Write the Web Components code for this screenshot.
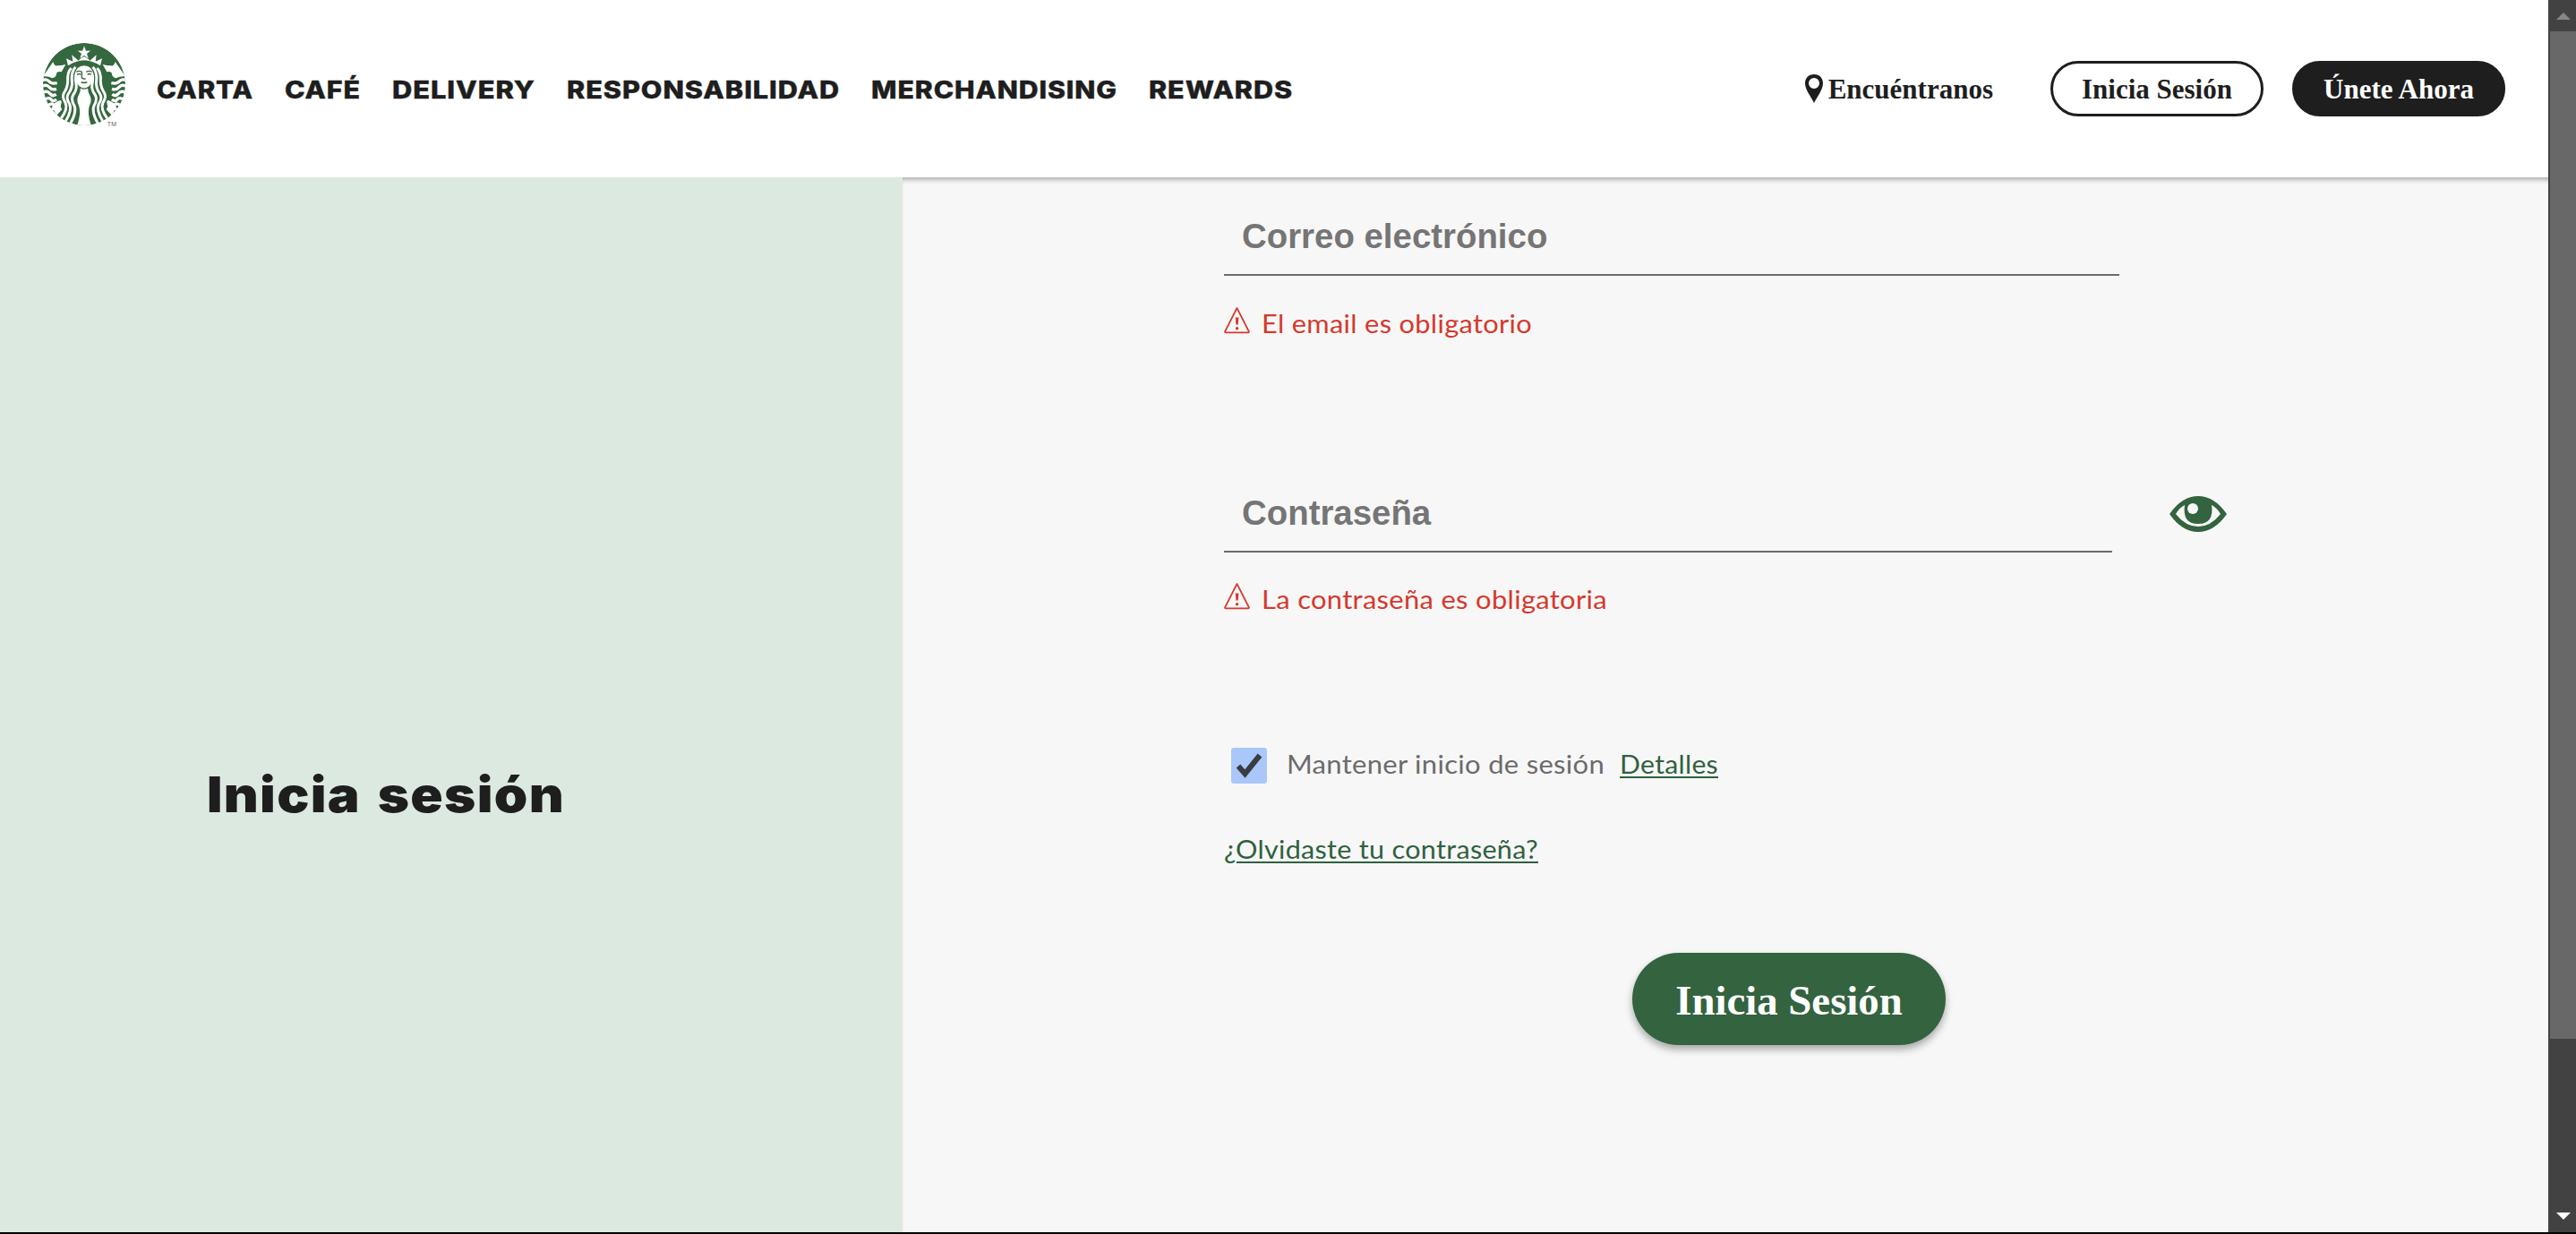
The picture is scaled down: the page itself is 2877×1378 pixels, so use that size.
<!DOCTYPE html>
<html lang="es"><head><meta charset="utf-8"><title>Inicia sesión</title>
<style>html,body{margin:0;height:100%;overflow:hidden}body{background:#f7f7f7}</style></head>
<body><login-page></login-page>
<script>
const define=(name,html,setup)=>customElements.define(name,class extends HTMLElement{
  connectedCallback(){
    if(this.shadowRoot)return;
    const t=document.createElement('template');t.innerHTML=html;
    const r=this.attachShadow({mode:'open'});r.append(t.content.cloneNode(true));
    if(setup)setup(this,r);
  }});

// Text run set to a given measure, by tracking or by widening its glyphs
define('fit-text','<style>:host{display:block;white-space:nowrap}span{display:inline-block;transform-origin:0 50%}:host([line]) span{text-decoration:underline;text-decoration-thickness:2px;text-underline-offset:3px}</style><span><slot></slot></span>',(h,r)=>{
  const s=r.querySelector('span'),w=+h.getAttribute('w');
  h.style.width=w+'px';
  const n=s.getBoundingClientRect().width;
  if(h.hasAttribute('wide'))s.style.transform=`scaleX(${w/n})`;
  else s.style.letterSpacing=(w-n)/h.textContent.length+'px';
});

define('siren-logo',`<style>:host{display:block;width:130px;height:130px}svg{display:block;width:100%;height:100%}text{font:21px "Liberation Sans",sans-serif;fill:#666}</style>
<svg viewBox="0 0 390 390"><defs><clipPath id="c"><circle cx="192" cy="192" r="138"/></clipPath>
<g id="half">
<path fill="#fff" d="M193 112 V100 L183 102 L173 113 L151 94 L154 116 L132 106 L138 130 Q164 113 193 112Z"/>
<path fill="#fff" d="M54 166 L88 117 Q92 132 102 130 Q116 130 130 126 L116 151 Q106 148 100 154 Q98 170 86 172 Q70 164 54 166Z"/>
<g fill="none" stroke="#fff" stroke-width="10">
<path d="M48 180 Q66 172 74 182 T101 188"/><path d="M48 200 Q66 191 75 202 T99 208"/><path d="M50 222 Q67 211 77 223 T98 226"/><path d="M58 246 Q74 233 81 243 T99 243"/><path d="M68 267 Q81 254 90 260"/></g>
<path fill="#fff" d="M88 260 Q101 246 118 245 L113 267 L118 277 L98 298 L91 280 L78 282Z"/>
<path fill="#36683f" d="M192 127 Q132 127 129 176 Q129 203 114 224 Q108 237 119 257 Q129 275 106 305 L192 334Z"/>
<g fill="none" stroke="#fff" stroke-width="9">
<path d="M149 138 Q135 151 137 181 Q137 203 124 222 Q117 236 129 254 Q139 275 113 309"/>
<path d="M163 134 Q148 151 151 181 Q154 205 139 224 Q130 239 143 258 Q153 278 129 318"/>
<path d="M168 150 Q160 168 165 190 Q169 210 155 228 Q147 243 158 262 Q169 282 146 324"/></g>
<path fill="#fff" d="M193 204 L179 200 Q182 215 172 232 Q165 246 174 264 Q183 287 168 332 H193Z"/>
</g></defs>
<g clip-path="url(#c)"><circle cx="192" cy="192" r="138" fill="#36683f"/>
<use href="#half"/><use href="#half" transform="matrix(-1 0 0 1 384 0)"/>
<path fill="#fff" stroke="#36683f" stroke-width="2" d="M192 61l6 18h18l-14 11 6 18-16-11-16 11 6-18-14-11h18z"/>
<path fill="#fff" d="M162 160 Q165 130 192 130 Q219 130 222 160 Q222 188 207 200 Q192 209 177 200 Q162 188 162 160Z"/>
<g fill="none" stroke="#36683f" stroke-width="4"><path d="M166 151q10-6 18 0v20l6 3h7M218 151q-10-6-19 0M168 160q7-5 13 0M203 160q7-5 13 0"/><path stroke-width="5" d="M182 185q10 4 20 0"/><path d="M176 201q16 13 32 0"/></g></g>
<text x="269" y="332" textLength="31">TM</text></svg>`);

define('pill-button',`<style>:host{display:block;box-sizing:border-box;width:238px;height:62px;border:3px solid #1e1e1e;border-radius:31px;color:#1e1e1e;font:bold 31px "Liberation Serif",serif}
:host([dark]){background:#1e1e1e;color:#fff}
:host([submit]){width:350px;height:103px;border:0;border-radius:52px;background:#33633f;color:#fff;font-size:46.8px;box-shadow:0 5px 9px rgba(0,0,0,.32)}
div{height:100%;display:flex;align-items:center;justify-content:center;white-space:nowrap;box-sizing:border-box;padding-top:2px}</style><div><slot></slot></div>`);

define('top-bar',`<style>:host{display:flex;position:relative;height:198px;width:2846px;box-sizing:border-box;background:#fff;padding:30px 48px 0 30px;color:#1e1e1e}
nav{display:flex;gap:35px;margin:51px 0 0 15px;font:800 27px/40px Inter,sans-serif;letter-spacing:.8px;-webkit-text-stroke:.4px}
.r{margin-left:auto;display:flex;height:62px;margin-top:38px;align-items:center}
.f{display:flex;align-items:center;font:bold 31px/40px "Liberation Serif",serif;gap:6px;margin-right:64px}
.f span{padding-top:2px}
pill-button+pill-button{margin-left:32px}svg{display:block}</style>
<siren-logo></siren-logo>
<nav><fit-text wide w="108">CARTA</fit-text><fit-text wide w="85">CAFÉ</fit-text><fit-text wide w="160">DELIVERY</fit-text><fit-text wide w="305">RESPONSABILIDAD</fit-text><fit-text wide w="275">MERCHANDISING</fit-text><fit-text wide w="161">REWARDS</fit-text></nav>
<div class="r"><div class="f"><svg width="20" height="32" viewBox="0 0 20 32"><path fill="#1e1e1e" fill-rule="evenodd" d="M10 0C4 0 0 4 0 10c0 7 6 14 10 22 4-8 10-15 10-22C20 4 16 0 10 0zm0 4a6 6 0 1 1 0 12 6 6 0 0 1 0-12z"/></svg><span>Encuéntranos</span></div>
<pill-button>Inicia Sesión</pill-button><pill-button dark>Únete Ahora</pill-button></div>`);

define('form-field',`<style>:host{display:block;width:992px;box-sizing:border-box;height:87px;border-bottom:2px solid #6b6b6b;padding-left:20px;color:#757575;font:bold 38.4px/86px "Liberation Sans",sans-serif}</style><slot></slot>`);

define('field-error',`<style>:host{display:flex;height:40px;color:#d5392d;font:29.5px/40px Lato,sans-serif;letter-spacing:.3px;gap:13px}svg{margin-top:2px;flex:none}</style>
<svg width="29" height="30" viewBox="0 0 29 30"><path d="M14.5 1 L28 27.5 Q28 28.3 27 28.3 H2 Q1 28.3 1 27.5Z" fill="none" stroke="currentColor" stroke-width="1.7" stroke-linejoin="round"/><path fill="currentColor" d="M12.8 11.5h3.6l-.6 8h-2.4z"/><circle cx="14.6" cy="23.8" r="1.7" fill="currentColor"/></svg><slot></slot>`);

define('eye-toggle',`<style>:host{display:block;width:64px;height:40px}svg{display:block}</style>
<svg width="64" height="40" viewBox="0 0 64 40"><path fill="#33633f" d="M0 20 Q14 0 32 0 T64 20 Q50 40 32 40 T0 20Z"/><path fill="#f7f7f7" d="M7 20 Q11 13 17 10 Q14 31 32 31 Q50 31 47 10 Q53 13 57 20 Q46 34 32 34 T7 20Z"/><circle cx="26" cy="14" r="6" fill="#f7f7f7"/></svg>`);

define('check-box',`<style>:host{display:block;width:40px;height:40px;background:#aac7fb;border-radius:3px}svg{display:block}</style>
<svg width="40" height="40" viewBox="0 0 40 40"><path d="M8 20.5 L15.5 29 L32 8.5" fill="none" stroke="#393c40" stroke-width="6"/></svg>`);

define('login-form',`<style>:host{display:flex;flex-direction:column;flex:1;background:#f7f7f7;padding:24px 0 0 359px;box-shadow:inset 0 6px 5px -3px rgba(0,0,0,.28);box-sizing:border-box}
.e{width:1000px;height:86px;line-height:84px}.e1{margin-top:33px}
.p{display:flex;align-items:flex-start;margin-top:149px}.p eye-toggle{margin:24px 0 0 64px}
.e2{margin-top:32px}
.k{display:flex;margin:146px 0 0 8px;font:29.5px/36px Lato,sans-serif;letter-spacing:.3px;color:#6b6b6b}
.k fit-text{margin-left:22px}.k a{margin-left:17px;display:block}
a{color:#2f613f}
.k a fit-text{margin:0}
.o{margin-top:53px;font:29.5px/40px Lato,sans-serif;letter-spacing:.3px}
pill-button{margin:96px 0 0 456px}</style>
<form-field class="e">Correo electrónico</form-field>
<field-error class="e1"><fit-text wide w="302">El email es obligatorio</fit-text></field-error>
<div class="p"><form-field>Contraseña</form-field><eye-toggle></eye-toggle></div>
<field-error class="e2"><fit-text wide w="386">La contraseña es obligatoria</fit-text></field-error>
<div class="k"><check-box></check-box><fit-text wide w="355">Mantener inicio de sesión</fit-text><a><fit-text wide line w="110">Detalles</fit-text></a></div>
<div class="o"><a><fit-text wide line w="351">¿Olvidaste tu contraseña?</fit-text></a></div>
<pill-button submit>Inicia Sesión</pill-button>`);

define('side-title',`<style>:host{display:block;width:1008px;box-sizing:border-box;background:#dce9e1;padding:649px 0 0 231px;color:#1e1e1e;font:900 55px/80px Inter,sans-serif;letter-spacing:1.2px;word-spacing:5px}</style><fit-text wide w="400">Inicia sesión</fit-text>`);

define('scroll-bar',`<style>:host{display:flex;flex-direction:column;width:31px;height:1376px;box-sizing:border-box;background:#424242;padding-left:2px}
.b{height:35px;display:flex;align-items:center;justify-content:center}i{flex:none;height:1125px;background:#686868}.g{flex:1}.d{padding-top:2px;height:38px;box-sizing:border-box}</style>
<div class="b"><svg width="16" height="8"><path fill="#868686" d="M0 8 8 0l8 8z"/></svg></div><i></i><div class="g"></div><div class="b d"><svg width="16" height="8"><path fill="#fff" d="M0 0h16L8 8z"/></svg></div>`);

define('login-page',`<style>:host{display:flex;width:2877px;height:1378px;box-sizing:border-box;border-bottom:2px solid #000;overflow:hidden}
.c{display:flex;flex-direction:column;width:2846px;height:1376px}main{display:flex;flex:1}</style>
<div class="c"><top-bar></top-bar><main><side-title></side-title><login-form></login-form></main></div><scroll-bar></scroll-bar>`);
</script></body></html>
